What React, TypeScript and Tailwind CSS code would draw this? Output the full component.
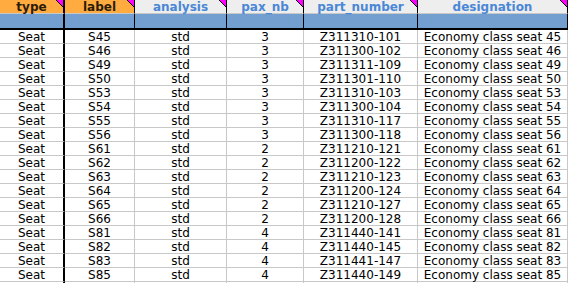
import React from "react";

type Col = { key: string; width: string; head: string; orange?: boolean };

const cols: Col[] = [
  { key: "type", width: "w-[65px] border-r-2", head: "type", orange: true },
  { key: "label", width: "w-[70px] border-r", head: "label", orange: true },
  { key: "analysis", width: "w-[92px] border-r", head: "analysis" },
  { key: "pax", width: "w-[77px] border-r", head: "pax_nb" },
  { key: "part", width: "w-[114px] border-r", head: "part_number" },
  { key: "desig", width: "w-[150px] border-r", head: "designation" },
];

const rows: Array<[string, string, string, string]> = [
  ["S45", "3", "Z311310-101", "45"],
  ["S46", "3", "Z311300-102", "46"],
  ["S49", "3", "Z311311-109", "49"],
  ["S50", "3", "Z311301-110", "50"],
  ["S53", "3", "Z311310-103", "53"],
  ["S54", "3", "Z311300-104", "54"],
  ["S55", "3", "Z311310-117", "55"],
  ["S56", "3", "Z311300-118", "56"],
  ["S61", "2", "Z311210-121", "61"],
  ["S62", "2", "Z311200-122", "62"],
  ["S63", "2", "Z311210-123", "63"],
  ["S64", "2", "Z311200-124", "64"],
  ["S65", "2", "Z311210-127", "65"],
  ["S66", "2", "Z311200-128", "66"],
  ["S81", "4", "Z311440-141", "81"],
  ["S82", "4", "Z311440-145", "82"],
  ["S83", "4", "Z311441-147", "83"],
  ["S85", "4", "Z311440-149", "85"],
];

const CommentMark = () => (
  <svg className="absolute right-0 top-0" width="7" height="7" viewBox="0 0 7 7">
    <polygon points="0,0 7,0 7,7" fill="#ff00ff" />
    <line x1="0" y1="0" x2="7" y2="7" stroke="#000" strokeWidth="1" />
  </svg>
);

export default function App() {
  return (
    <div className="w-[571px] h-[283px] overflow-hidden bg-white font-['DejaVu_Sans',sans-serif] text-[12px] text-black">
      {/* header names */}
      <div className="flex h-[14px]">
        {cols.map((c) => (
          <div
            key={c.key}
            className={`${c.width} relative box-border flex items-center justify-center border-b border-b-[#c8c8c8] border-r-black font-bold text-[12px] leading-none ${
              c.orange ? "bg-[#ffab40] text-[#2a1c08]" : "bg-[#eeeeee] text-[#4a87d6]"
            }`}
          >
            {c.head}
            <CommentMark />
          </div>
        ))}
      </div>

      {/* blue band */}
      <div className="flex h-[16px]">
        {cols.map((c) => (
          <div
            key={c.key}
            className={`${c.width} box-border border-b-2 border-b-black border-r-black bg-[#729fcf]`}
          />
        ))}
      </div>

      {/* data */}
      {[...rows, null].map((r, i) => {
        const vals = r
          ? ["Seat", r[0], "std", r[1], r[2], `Economy class seat ${r[3]}`]
          : ["", "", "", "", "", ""];
        return (
          <div key={i} className="flex h-[14px]">
            {cols.map((c, j) => (
              <div
                key={c.key}
                className={`${c.width} box-border flex items-center justify-center whitespace-nowrap border-b border-b-[#c8c8c8] leading-none ${
                  j === 0 ? "border-r-black" : "border-r-[#c8c8c8]"
                }`}
              >
                {vals[j]}
              </div>
            ))}
          </div>
        );
      })}
    </div>
  );
}
